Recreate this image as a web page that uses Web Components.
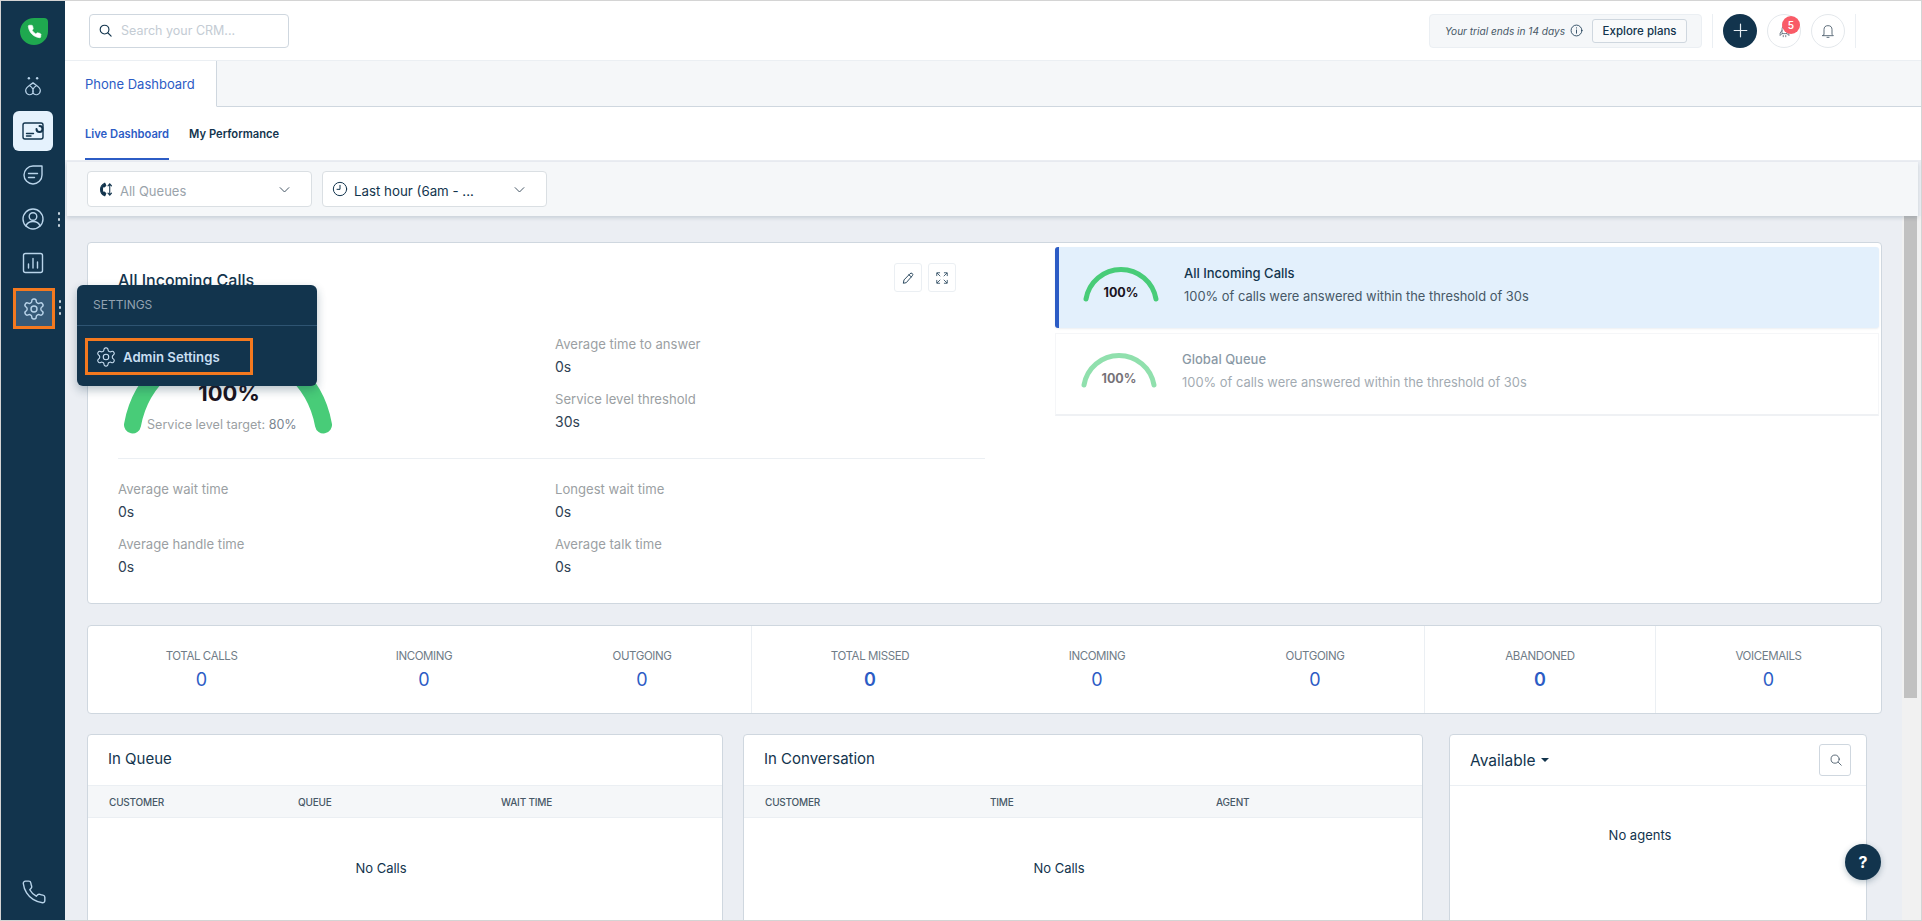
<!DOCTYPE html>
<html>
<head>
<meta charset="utf-8">
<title>Phone Dashboard</title>
<style>
  html, body { margin: 0; height: 100%; }
  body {
    box-sizing: border-box;
    height: 921px;
    overflow: hidden;
    border: 1px solid #d4d4d4;
    font-family: Inter, "Noto Sans", sans-serif;
    color: #12344d;
    background: #ebeef3;
  }
  crm-app { height: 919px; }
</style>
</head>
<body>
<crm-app></crm-app>

<script>
// icon paths, all drawn on a 24x24 box
const ICONS = {
  gear: '<path d="M12.22 2h-.44a2 2 0 0 0-2 2v.18a2 2 0 0 1-1 1.73l-.43.25a2 2 0 0 1-2 0l-.15-.08a2 2 0 0 0-2.73.73l-.22.38a2 2 0 0 0 .73 2.73l.15.1a2 2 0 0 1 1 1.72v.51a2 2 0 0 1-1 1.74l-.15.09a2 2 0 0 0-.73 2.73l.22.38a2 2 0 0 0 2.73.73l.15-.08a2 2 0 0 1 2 0l.43.25a2 2 0 0 1 1 1.73V20a2 2 0 0 0 2 2h.44a2 2 0 0 0 2-2v-.18a2 2 0 0 1 1-1.73l.43-.25a2 2 0 0 1 2 0l.15.08a2 2 0 0 0 2.73-.73l.22-.39a2 2 0 0 0-.73-2.73l-.15-.08a2 2 0 0 1-1-1.74v-.5a2 2 0 0 1 1-1.74l.15-.09a2 2 0 0 0 .73-2.73l-.22-.38a2 2 0 0 0-2.73-.73l-.15.08a2 2 0 0 1-2 0l-.43-.25a2 2 0 0 1-1-1.73V4a2 2 0 0 0-2-2z"/><circle cx="12" cy="12" r="3"/>',
  phone: '<path d="M22 16.92v3a2 2 0 0 1-2.18 2 19.79 19.79 0 0 1-8.63-3.07 19.5 19.5 0 0 1-6-6 19.79 19.79 0 0 1-3.07-8.67A2 2 0 0 1 4.11 2h3a2 2 0 0 1 2 1.72 12.84 12.84 0 0 0 .7 2.81 2 2 0 0 1-.45 2.11L8.09 9.91a16 16 0 0 0 6 6l1.27-1.27a2 2 0 0 1 2.11-.45 12.84 12.84 0 0 0 2.81.7A2 2 0 0 1 22 16.92z"/>',
  freddy: '<circle cx="7.500" cy="3.500" r="1.300" fill="currentColor" stroke="none"/><circle cx="16.500" cy="3.500" r="1.300" fill="currentColor" stroke="none"/><path d="M12 8.500C9.500 11 4 13 4 17a4.500 4.500 0 0 0 8 2.800 4.500 4.500 0 0 0 8-2.800C20 13 14.500 11 12 8.500z"/><path d="M8.500 11.800C12 14 13 16 12 19.800M15.500 11.800C12 14 11 16 12 19.800"/>',
  dash: '<rect x="2" y="4" width="20" height="16" rx="2"/><path d="M5.500 14.500h7M5.500 17h4.500"/><path d="M15.500 10a3 3 0 1 0 3-3" stroke-width="2"/>',
  chat: '<path d="M12 3h9v9a9 9 0 1 1-9-9z"/><path d="M7.500 10.500h9M7.500 14.500h6"/>',
  person: '<circle cx="12" cy="12" r="10"/><circle cx="12" cy="9.500" r="3.800"/><path d="M5 19c1-3 3.500-4.500 7-4.500s6 1.500 7 4.500"/>',
  chart: '<rect x="2.500" y="2.500" width="19" height="19" rx="2"/><path d="M7.500 17v-4M12 17V7.500M16.500 17v-6"/>',
  search: '<circle cx="10.500" cy="10.500" r="7"/><path d="M16 16l5 5"/>',
  info: '<circle cx="12" cy="12" r="10"/><path d="M12 11v6M12 7v.5"/>',
  bell: '<path d="M6 17V10a6 6 0 0 1 12 0v7l2 2H4z"/><path d="M10.500 21.500h3"/>',
  rocket: '<path d="M12 2c3 2.500 4 6 4 9v6H8v-6c0-3 1-6.500 4-9z"/><path d="M8 12l-3 4v4l3-3M16 12l3 4v4l-3-3M10 20v2M14 20v2"/>',
  plus: '<path d="M12 4v16M4 12h16"/>',
  pencil: '<path d="M15.500 4.500a2.500 2.500 0 0 1 4 3.500L9 20l-5 1 1-5z"/><path d="M13.500 6.500l4 3.500"/>',
  expand: '<path d="M3 8V3h5M21 8V3h-5M3 16v5h5M21 16v5h-5"/><path d="M4 4l4.500 4.500M20 4l-4.500 4.500M4 20l4.500-4.500M20 20l-4.500-4.500"/>',
  chevron: '<path d="M5 9l7 7 7-7"/>',
  clock: '<circle cx="12" cy="12" r="10"/><path d="M12 6.500V12.500H7.500"/>',
  queues: '<path d="M11 3C6.500 5 5 9 5 12s1.500 7 6 9l1.500-3.500-2.500-2-1.500 1c-1-2-1-7 0-9l1.500 1 2.500-2z" fill="currentColor"/><path d="M18 4v16M15.500 7L18 4l2.500 3M15.500 17l2.500 3 2.500-3"/>'
};

class XIcon extends HTMLElement {
  connectedCallback() {
    const name = this.getAttribute('name');
    const size = this.getAttribute('size') || 24;
    const sw = this.getAttribute('weight') || 1.5;
    const fill = this.hasAttribute('solid') ? 'currentColor' : 'none';
    this.attachShadow({ mode: 'open' }).innerHTML = `
      <style>:host { display: inline-flex; flex: none; } svg { display: block; }</style>
      <svg width="${size}" height="${size}" viewBox="0 0 24 24" fill="${fill}" stroke="currentColor"
           stroke-width="${sw}" stroke-linecap="round" stroke-linejoin="round">${ICONS[name]}</svg>`;
  }
}
customElements.define('x-icon', XIcon);

class SideItem extends HTMLElement {
  connectedCallback() {
    const name = this.getAttribute('icon');
    const more = this.hasAttribute('more');
    this.attachShadow({ mode: 'open' }).innerHTML = `
      <style>
        :host { display: flex; width: 40px; height: 40px; margin: 2px 0 2px 12px; align-items: center; justify-content: center; position: relative; color: #b9d4ea; border-radius: 6px; box-sizing: border-box; }
        :host([active]) { background: #e5f2fd; color: #12344d; }
        :host([marked]) { background: #365a78; border: 3px solid #f4791f; border-radius: 0; width: 42px; height: 41px; margin-top: 3px; }
        .dots { position: absolute; left: 45px; top: 13px; display: flex; flex-direction: column; gap: 3px; }
        :host([marked]) .dots { left: 43px; top: 9px; }
        .dots i { width: 2px; height: 3px; border-radius: 1px; background: #c9d6e0; }
      </style>
      <x-icon name="${name}" size="24" weight="1.400"></x-icon>
      ${more ? '<span class="dots"><i></i><i></i><i></i></span>' : ''}`;
  }
}
customElements.define('side-item', SideItem);

class AppSidebar extends HTMLElement {
  constructor() {
    super();
    this.attachShadow({ mode: 'open' }).innerHTML = `
      <style>
        :host { display: flex; flex-direction: column; width: 64px; flex: none; background: #12344d; }
        .logo { width: 28px; height: 27px; margin: 17px 0 0 19px; background: #1fa84f; border-radius: 50% 4px 50% 50%; color: #fff; display: flex; align-items: center; justify-content: center; }
        nav { margin-top: 30px; display: flex; flex-direction: column; gap: 0; }
        .bottom { margin: auto 0 11px 20px; color: #b9d4ea; }
        .plain { display: flex; justify-content: center; width: 40px; margin-left: 12px; color: #b9d4ea; height: 24px; margin-bottom: 10px; }
      </style>
      <div class="logo"><x-icon name="phone" size="15" solid weight="1"></x-icon></div>
      <nav>
        <div class="plain"><x-icon name="freddy" size="22" weight="1.300"></x-icon></div>
        <side-item icon="dash" active></side-item>
        <side-item icon="chat"></side-item>
        <side-item icon="person" more></side-item>
        <side-item icon="chart"></side-item>
        <side-item icon="gear" more marked></side-item>
      </nav>
      <div class="bottom"><x-icon name="phone" size="26" weight="1.300"></x-icon></div>`;
  }
}
customElements.define('app-sidebar', AppSidebar);

class TopBar extends HTMLElement {
  constructor() {
    super();
    this.attachShadow({ mode: 'open' }).innerHTML = `
      <style>
        :host { display: flex; align-items: center; height: 59px; flex: none; background: #fff; border-bottom: 1px solid #ebeff3; padding: 0 0 0 24px; box-sizing: content-box; }
        .search { width: 200px; height: 34px; box-sizing: border-box; border: 1px solid #cfd7df; border-radius: 4px; display: flex; align-items: center; gap: 8px; padding-left: 8px; color: #12344d; font-size: 12.500px; }
        .search span { color: #c4ccd4; }
        .trial { margin-left: auto; width: 273px; height: 34px; box-sizing: border-box; background: #f5f7f9; border: 1px solid #ebeff3; border-radius: 4px; display: flex; align-items: center; padding-left: 15px; font-size: 10.100px; font-style: italic; color: #475867; }
        .trial x-icon { margin-left: 5px; color: #12344d; }
        button { margin-left: 9px; height: 24px; width: 95px; font: 500 11.500px Inter, sans-serif; color: #12344d; background: #f9fafb; border: 1px solid #cfd7df; border-radius: 3px; padding: 0; }
        .sep { width: 1px; height: 34px; background: #ebeff3; margin: 0 10px; }
        .round { width: 34px; height: 34px; box-sizing: border-box; border-radius: 50%; border: 1px solid #e4e8ec; display: flex; align-items: center; justify-content: center; color: #475867; position: relative; }
        .round + .round { margin-left: 10px; }
        .round.dark { background: #12344d; border: 0; color: #e6edf3; }
        .badge { position: absolute; left: 14px; top: 1px; width: 18px; height: 18px; border-radius: 50%; background: #f95b67; color: #fff; font-size: 10px; font-weight: 600; display: flex; align-items: center; justify-content: center; }
        .end { margin-right: 65px; }
      </style>
      <div class="search"><x-icon name="search" size="15" weight="1.800"></x-icon><span>Search your CRM...</span></div>
      <div class="trial">Your trial ends in 14 days<x-icon name="info" size="13" weight="1.500"></x-icon><button>Explore plans</button></div>
      <div class="sep"></div>
      <div class="round dark"><x-icon name="plus" size="19" weight="1.500"></x-icon></div>
      <div class="round"><x-icon name="rocket" size="15" weight="1.200"></x-icon><span class="badge">5</span></div>
      <div class="round"><x-icon name="bell" size="16" weight="1.300"></x-icon></div>
      <div class="sep end"></div>`;
  }
}
customElements.define('top-bar', TopBar);

class PageTabs extends HTMLElement {
  constructor() {
    super();
    this.attachShadow({ mode: 'open' }).innerHTML = `
      <style>
        :host { display: block; flex: none; }
        .tabs { height: 45px; background: #f5f7f9; border-bottom: 1px solid #cfd7df; display: flex; }
        .tab { width: 131px; padding-left: 20px; background: #fff; border-right: 1px solid #cfd7df; margin-bottom: -1px; border-bottom: 1px solid #fff; font-size: 13px; color: #2c5cc5; line-height: 47px; }
        .sub { height: 53px; background: #fff; display: flex; padding-left: 20px; gap: 20px; font-size: 11.200px; font-weight: 600; color: #12344d; box-sizing: content-box; }
        .sub div { line-height: 54px; height: 51px; }
        .sub .on { color: #2c5cc5; border-bottom: 2px solid #2c5cc5; }
      </style>
      <div class="tabs"><div class="tab">Phone Dashboard</div></div>
      <div class="sub"><div class="on">Live Dashboard</div><div>My Performance</div></div>`;
  }
}
customElements.define('page-tabs', PageTabs);

class FilterSelect extends HTMLElement {
  connectedCallback() {
    const icon = this.getAttribute('icon');
    const size = this.getAttribute('icon-size') || 16;
    this.attachShadow({ mode: 'open' }).innerHTML = `
      <style>
        :host { display: flex; align-items: center; width: 225px; height: 36px; box-sizing: border-box; background: #fff; border: 1px solid #dadfe3; border-radius: 4px; padding: 0 19px 0 9px; font-size: 13px; color: #9aa3ab; }
        :host([filled]) { color: #12344d; font-size: 13.300px; }
        x-icon.lead { color: #12344d; margin-right: 6px; }
        span { flex: 1; padding-top: 3px; }
        x-icon.chev { color: #475867; }
      </style>
      <x-icon class="lead" name="${icon}" size="${size}" weight="1.500"></x-icon>
      <span><slot></slot></span>
      <x-icon class="chev" name="chevron" size="15" weight="1.600"></x-icon>`;
  }
}
customElements.define('filter-select', FilterSelect);

class FilterBar extends HTMLElement {
  constructor() {
    super();
    this.attachShadow({ mode: 'open' }).innerHTML = `
      <style>
        :host { display: flex; flex: none; gap: 10px; align-items: center; height: 54px; margin: 2px 3px 0 2px; padding-left: 20px; background: #f5f7f9; box-shadow: 0 2px 4px rgba(18,52,77,.16); position: relative; z-index: 2; }
      </style>
      <filter-select icon="queues" icon-size="17">All Queues</filter-select>
      <filter-select icon="clock" filled>Last hour (6am - ...</filter-select>`;
  }
}
customElements.define('filter-bar', FilterBar);

class MetricItem extends HTMLElement {
  connectedCallback() {
    this.attachShadow({ mode: 'open' }).innerHTML = `
      <style>
        :host { display: block; margin-bottom: 10px; }
        .l { font-size: 13.100px; line-height: 20px; color: #9b9fa3; margin-bottom: 1px; }
        .v { font-size: 14px; line-height: 24px; color: #2f4254; }
      </style>
      <div class="l">${this.getAttribute('label')}</div>
      <div class="v">${this.getAttribute('value')}</div>`;
  }
}
customElements.define('metric-item', MetricItem);

class BigGauge extends HTMLElement {
  constructor() {
    super();
    this.attachShadow({ mode: 'open' }).innerHTML = `
      <style>
        :host { display: block; position: relative; width: 437px; height: 100px; padding-top: 3px; box-sizing: border-box; }
        svg { display: block; margin-left: 5px; }
        .pct { position: absolute; left: 61px; top: 44px; width: 100px; text-align: center; font-size: 22px; font-weight: 700; line-height: 30px; color: #1a1320; }
        .target { position: absolute; left: 29px; top: 81px; font-size: 12.600px; line-height: 20px; color: #9b9fa3; white-space: nowrap; }
        .target b { font-weight: 400; color: #7a8590; }
      </style>
      <svg width="210" height="97" viewBox="0 0 210 97"><path d="M9.500 88A97 97 0 0 1 200.500 88" fill="none" stroke="#48cc78" stroke-width="17" stroke-linecap="round"/></svg>
      <div class="pct">100%</div>
      <div class="target">Service level target: <b>80%</b></div>`;
  }
}
customElements.define('big-gauge', BigGauge);

class QueueRow extends HTMLElement {
  connectedCallback() {
    const faded = this.hasAttribute('faded');
    this.attachShadow({ mode: 'open' }).innerHTML = `
      <style>
        :host { display: flex; box-sizing: border-box; height: 81px; background: #fff; padding: 19px 0 0 25px; border: 1px solid #f5f6f8; border-bottom: 2px solid #eff1f4; }
        :host([active]) { background: #e3f0fc; border: 0; border-left: 4px solid #2c5cc5; padding-left: 24px; border-radius: 3px; height: 81px; box-shadow: 0 1px 2px rgba(18,52,77,.08); }
        :host([faded]) { height: 83px; margin-top: 5px; padding-top: 18px; }
        .dial { position: relative; width: 76px; height: 36px; flex: none; ${faded ? 'opacity: .6;' : ''} }
        svg { display: block; }
        .dial b { position: absolute; left: 0; right: 0; top: 17px; text-align: center; font-size: 12.500px; font-weight: 700; line-height: 20px; color: #1a1320; }
        .txt { margin: -3px 0 0 25px; ${faded ? 'opacity: .5;' : ''} }
        .t { font-size: 13px; line-height: 20px; font-weight: 500; color: #12344d; margin-bottom: 4px; }
        .s { font-size: 12.900px; line-height: 20px; color: #475867; }
      </style>
      <div class="dial"><svg width="76" height="36" viewBox="0 0 76 36"><path d="M3 33A35.500 35.500 0 0 1 73 33" fill="none" stroke="#48cc78" stroke-width="5" stroke-linecap="round"/></svg><b>100%</b></div>
      <div class="txt"><div class="t">${this.getAttribute('title')}</div><div class="s">100% of calls were answered within the threshold of 30s</div></div>`;
  }
}
customElements.define('queue-row', QueueRow);

class ServiceCard extends HTMLElement {
  constructor() {
    super();
    this.attachShadow({ mode: 'open' }).innerHTML = `
      <style>
        :host { display: flex; box-sizing: border-box; height: 362px; background: #fff; border: 1px solid #cfd7df; border-radius: 4px; }
        .left { width: 967px; flex: none; box-sizing: border-box; padding: 20px 0 0 30px; }
        .head { display: flex; align-items: center; height: 29px; width: 838px; }
        h2 { margin: 0; padding-top: 4px; font-size: 16px; font-weight: 500; color: #12344d; line-height: 36px; }
        .tools { margin-left: auto; display: flex; gap: 6px; }
        .tools span { width: 28px; height: 29px; box-sizing: border-box; border: 1px solid #ebeff3; border-radius: 3px; display: flex; align-items: center; justify-content: center; color: #12344d; }
        .row { display: flex; margin-top: 42px; }
        .col { display: flex; flex-direction: column; }
        hr { border: 0; border-top: 1px solid #ebeff3; margin: 14px 0 20px; width: 867px; }
        .grid { display: grid; grid-template-columns: 437px 1fr; }
        .right { flex: 1; padding: 4px 2px 0 0; }
      </style>
      <div class="left">
        <div class="head"><h2>All Incoming Calls</h2>
          <div class="tools"><span><x-icon name="pencil" size="14" weight="1.500"></x-icon></span><span><x-icon name="expand" size="14" weight="1.300"></x-icon></span></div>
        </div>
        <div class="row">
          <big-gauge></big-gauge>
          <div class="col">
            <metric-item label="Average time to answer" value="0s"></metric-item>
            <metric-item label="Service level threshold" value="30s"></metric-item>
          </div>
        </div>
        <hr>
        <div class="grid">
          <metric-item label="Average wait time" value="0s"></metric-item>
          <metric-item label="Longest wait time" value="0s"></metric-item>
          <metric-item label="Average handle time" value="0s"></metric-item>
          <metric-item label="Average talk time" value="0s"></metric-item>
        </div>
      </div>
      <div class="right">
        <queue-row active title="All Incoming Calls"></queue-row>
        <queue-row faded title="Global Queue"></queue-row>
      </div>`;
  }
}
customElements.define('service-card', ServiceCard);

class StatCell extends HTMLElement {
  connectedCallback() {
    this.attachShadow({ mode: 'open' }).innerHTML = `
      <style>
        :host { display: block; text-align: center; padding-top: 20px; box-sizing: border-box; height: 87px; }
        :host([line]) { border-left: 1px solid #ebeff3; }
        .l { font-size: 11.500px; letter-spacing: -.4px; line-height: 20px; color: #6f7c87; }
        .v { font-size: 18px; line-height: 28px; color: #2c5cc5; }
        :host([strong]) .v { font-weight: 600; }
      </style>
      <div class="l">${this.getAttribute('label')}</div>
      <div class="v">0</div>`;
  }
}
customElements.define('stat-cell', StatCell);

class StatStrip extends HTMLElement {
  constructor() {
    super();
    this.attachShadow({ mode: 'open' }).innerHTML = `
      <style>
        :host { display: grid; grid-template-columns: 227px 218px 218px 237px 218px 218px 231px 1fr; height: 89px; box-sizing: border-box; background: #fff; border: 1px solid #cfd7df; border-radius: 4px; margin-top: 21px; }
      </style>
      <stat-cell label="TOTAL CALLS"></stat-cell>
      <stat-cell label="INCOMING"></stat-cell>
      <stat-cell label="OUTGOING"></stat-cell>
      <stat-cell label="TOTAL MISSED" line strong></stat-cell>
      <stat-cell label="INCOMING"></stat-cell>
      <stat-cell label="OUTGOING"></stat-cell>
      <stat-cell label="ABANDONED" line strong></stat-cell>
      <stat-cell label="VOICEMAILS" line></stat-cell>`;
  }
}
customElements.define('stat-strip', StatStrip);

class CallPanel extends HTMLElement {
  connectedCallback() {
    const cols = (this.getAttribute('cols') || '').split(',');
    const widths = this.getAttribute('widths');
    this.attachShadow({ mode: 'open' }).innerHTML = `
      <style>
        :host { display: block; height: 200px; box-sizing: border-box; background: #fff; border: 1px solid #cfd7df; border-radius: 4px; }
        .h { height: 50px; padding-left: 20px; font-size: 15px; font-weight: 400; line-height: 48px; color: #12344d; }
        .c { display: grid; grid-template-columns: ${widths}; height: 33px; box-sizing: border-box; background: #f5f7f9; border-top: 1px solid #ebeff3; border-bottom: 1px solid #ebeff3; padding-left: 21px; font-size: 10px; letter-spacing: -.2px; font-weight: 500; line-height: 33px; color: #475867; }
        .e { text-align: center; font-size: 13px; line-height: 20px; margin-top: 40px; color: #12344d; padding-right: 48px; }
      </style>
      <div class="h">${this.getAttribute('heading')}</div>
      <div class="c">${cols.map(c => `<span>${c}</span>`).join('')}</div>
      <div class="e">No Calls</div>`;
  }
}
customElements.define('call-panel', CallPanel);

class AgentPanel extends HTMLElement {
  constructor() {
    super();
    this.attachShadow({ mode: 'open' }).innerHTML = `
      <style>
        :host { display: block; height: 200px; box-sizing: border-box; background: #fff; border: 1px solid #cfd7df; border-radius: 4px; }
        .h { height: 50px; display: flex; align-items: center; padding: 0 15px 0 20px; font-size: 15.500px; color: #12344d; border-bottom: 1px solid #ebeff3; }
        .h i { margin-left: 6px; border: 4px solid transparent; border-top-color: #12344d; border-bottom: 0; }
        .btn { margin-left: auto; width: 32px; height: 32px; box-sizing: border-box; border: 1px solid #cfd7df; border-radius: 3px; display: flex; align-items: center; justify-content: center; color: #475867; padding-left: 2px; }
        .e { text-align: center; font-size: 13px; line-height: 20px; margin-top: 39px; color: #12344d; padding-right: 36px; }
      </style>
      <div class="h">Available<i></i><span class="btn"><x-icon name="search" size="14" weight="1.500"></x-icon></span></div>
      <div class="e">No agents</div>`;
  }
}
customElements.define('agent-panel', AgentPanel);

class DashView extends HTMLElement {
  constructor() {
    super();
    this.attachShadow({ mode: 'open' }).innerHTML = `
      <style>
        :host { display: block; flex: 1; min-width: 0; padding: 26px 20px 0 22px; overflow: hidden; box-sizing: border-box; }
        .panels { display: grid; grid-template-columns: 636px 680px 424px; column-gap: 20px; margin-top: 20px; }
        agent-panel { margin-left: 6px; }
      </style>
      <service-card></service-card>
      <stat-strip></stat-strip>
      <div class="panels">
        <call-panel heading="In Queue" cols="CUSTOMER,QUEUE,WAIT TIME" widths="189px 203px 1fr"></call-panel>
        <call-panel heading="In Conversation" cols="CUSTOMER,TIME,AGENT" widths="225px 226px 1fr"></call-panel>
        <agent-panel></agent-panel>
      </div>`;
  }
}
customElements.define('dash-view', DashView);

class FakeScroll extends HTMLElement {
  constructor() {
    super();
    this.attachShadow({ mode: 'open' }).innerHTML = `
      <style>
        :host { display: block; flex: none; width: 19px; background: #f1f1f1; padding: 0 4px 0 2px; box-sizing: border-box; }
        div { height: 482px; background: #c1c1c1; }
      </style>
      <div></div>`;
  }
}
customElements.define('fake-scroll', FakeScroll);

class SettingsMenu extends HTMLElement {
  constructor() {
    super();
    this.attachShadow({ mode: 'open' }).innerHTML = `
      <style>
        :host { position: absolute; left: 76px; top: 284px; width: 240px; height: 101px; background: #12344d; border-radius: 6px; box-shadow: 0 4px 10px rgba(18,52,77,.3); z-index: 5; }
        .t { height: 40px; padding-left: 16px; font-size: 12px; line-height: 40px; color: #92a2b1; border-bottom: 1px solid #2e5472; }
        .i { margin: 12px 0 0 8px; width: 168px; height: 37px; box-sizing: border-box; border: 3px solid #f4791f; display: flex; align-items: center; padding-left: 7px; gap: 6px; font-size: 13.200px; font-weight: 600; color: #c9dff2; }
      </style>
      <div class="t">SETTINGS</div>
      <div class="i"><x-icon name="gear" size="22" weight="1.200"></x-icon>Admin Settings</div>`;
  }
}
customElements.define('settings-menu', SettingsMenu);

class HelpButton extends HTMLElement {
  constructor() {
    super();
    this.attachShadow({ mode: 'open' }).innerHTML = `
      <style>
        :host { position: absolute; left: 1844px; top: 843px; width: 36px; height: 36px; border-radius: 50%; background: #12344d; color: #fff; font-size: 16px; font-weight: 700; display: flex; align-items: center; justify-content: center; box-shadow: 0 2px 6px rgba(18,52,77,.3); z-index: 5; }
      </style>?`;
  }
}
customElements.define('help-button', HelpButton);

class CrmApp extends HTMLElement {
  constructor() {
    super();
    this.attachShadow({ mode: 'open' }).innerHTML = `
      <style>
        :host { display: flex; position: relative; overflow: hidden; }
        main { flex: 1; min-width: 0; display: flex; flex-direction: column; background: #ebeef3; }
        .below { flex: 1; min-height: 0; display: flex; }
      </style>
      <app-sidebar></app-sidebar>
      <main>
        <top-bar></top-bar>
        <page-tabs></page-tabs>
        <filter-bar></filter-bar>
        <div class="below"><dash-view></dash-view><fake-scroll></fake-scroll></div>
      </main>
      <settings-menu></settings-menu>
      <help-button></help-button>`;
  }
}
customElements.define('crm-app', CrmApp);
</script>
</body>
</html>
